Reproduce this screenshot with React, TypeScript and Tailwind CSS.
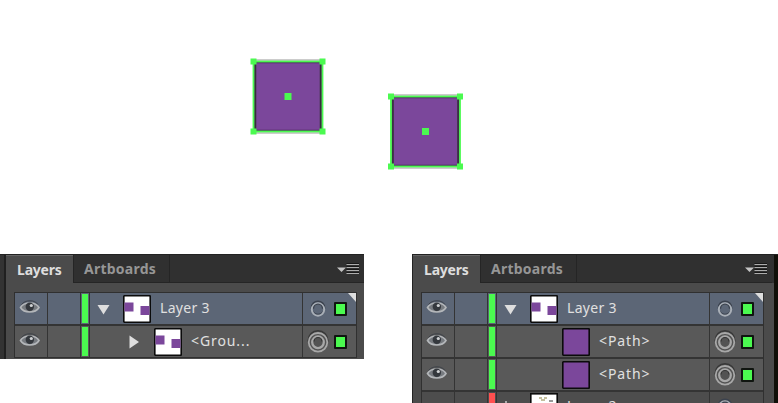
import type { ReactNode } from "react";

function Eye() {
  return (
    <svg width="22" height="18" viewBox="0 0 22 18">
      <path d="M1.5 9.500C5 3.500 16.500 3.500 20 9.500C16.500 15.500 5 15.500 1.500 9.500Z" fill="#777b80" stroke="#b4b7ba" strokeWidth="1.600" />
      <path d="M2.500 6.500C6 1.500 16 1.500 19 6.500" fill="none" stroke="#3b4047" strokeWidth="0.900" />
      <circle cx="10.800" cy="8.800" r="4.200" fill="#34383d" />
      <circle cx="12.300" cy="7.500" r="1.600" fill="#d0d2d4" />
    </svg>
  );
}

function Target({ double }: { double?: boolean }) {
  return (
    <svg width="24" height="26" viewBox="0 0 24 26">
      {double ? (
        <>
          <circle cx="12" cy="12.500" r="9.800" fill="none" stroke="#383838" strokeWidth="1.500" />
          <circle cx="12" cy="14.300" r="9.300" fill="#535353" stroke="#a8a8a8" strokeWidth="1.800" />
          <circle cx="12" cy="14.300" r="5.800" fill="none" stroke="#a8a8a8" strokeWidth="2.300" />
          <path d="M8 13.500a4 4 0 0 1 8 0" fill="none" stroke="#333" strokeWidth="1.200" />
        </>
      ) : (
        <>
          <circle cx="12" cy="12.800" r="6.600" fill="none" stroke="#3b424e" strokeWidth="1.500" />
          <circle cx="12" cy="14.500" r="6.200" fill="none" stroke="#a9afb7" strokeWidth="2" />
          <path d="M7.500 13.700a4.500 4.500 0 0 1 9 0" fill="none" stroke="#3b424e" strokeWidth="1.300" />
        </>
      )}
    </svg>
  );
}

function Thumb({ solid }: { solid?: boolean }) {
  return (
    <svg width="28" height="28" viewBox="0 0 28 28" className="shrink-0">
      <rect x="0.750" y="0.750" width="26.500" height="26.500" rx="1" fill={solid ? "#7b479b" : "#fff"} stroke="#0b0b0b" strokeWidth="1.700" />
      {!solid && (
        <>
          <rect x="1.500" y="7.500" width="9" height="9" fill="#7b479b" />
          <rect x="17.500" y="11" width="9" height="9" fill="#7b479b" />
        </>
      )}
    </svg>
  );
}

function Arrow({ open }: { open?: boolean }) {
  return (
    <svg width="14" height="14" viewBox="0 0 14 14" className="shrink-0">
      <path d={open ? "M0.500 3H12.500L6.500 12.500Z" : "M1.500 0.500V13.500L11 7Z"} fill="#dedede" />
    </svg>
  );
}

function Row({ selected, children }: { selected?: boolean; children: ReactNode }) {
  return (
    <div className={`flex h-[31px] gap-px ${selected ? "[&>*]:bg-[#5c6676]" : "[&>*]:bg-[#595959]"}`}>
      <div className="w-8 pt-[5px] pl-1"><Eye /></div>
      <div className="w-8" />
      <div className="flex w-[8px] justify-center py-px"><div className="h-full w-1.5 bg-[#4bfa50]" /></div>
      <div className="flex w-[212px] items-center">{children}</div>
      <div className="relative flex w-[53px]">
        <div className="w-[31px] pt-[2px] pl-[3px]"><Target double={!selected} /></div>
        <div className="mt-[9px] h-[14px] w-[13px] rounded-[1px] border-2 border-[#101510] bg-[#4bfa50]" />
        {selected && <svg className="absolute top-0 right-0" width="8" height="9"><path d="M0 0H8V9Z" fill="#dedede" /></svg>}
      </div>
    </div>
  );
}

function Tabs() {
  return (
    <div className="flex h-7 text-[14px] font-bold">
      <div className="-mb-px h-[29px] w-[67px] border-t border-[#646464] bg-[#4b4b4b] pl-[11px] leading-[27px] text-[#dedede]"><span className="tracking-[-0.200px]">Layers</span></div>
      <div className="w-[97px] border-x border-b border-[#252525] pl-[10px] leading-[28px] text-[#969696]"><span className="tracking-[0.250px]">Artboards</span></div>
      <div className="flex flex-1 justify-end border-b border-[#252525] pt-[7px] pr-[4px]">
        <svg width="24" height="16" viewBox="0 0 24 16">
          <path d="M1 5.500H10L5.500 10Z" fill="#c4c4c4" />
          <path d="M10.500 1.500H23M10.500 4.500H23M10.500 7.500H23M10.500 10.500H23" stroke="#181818" />
          <path d="M10.500 2.500H23M10.500 5.500H23M10.500 8.500H23M10.500 11.500H23" stroke="#adadad" />
        </svg>
      </div>
    </div>
  );
}

function Label({ children, wide }: { children: ReactNode; wide?: boolean }) {
  return <span className={`pb-px text-[14px] leading-5 whitespace-nowrap text-[#e0e0e0] ${wide ? "tracking-[0.900px]" : "tracking-[0.300px]"}`}>{children}</span>;
}

function LayerOne() {
  return (
    <Row selected>
      <div className="w-[7px] shrink-0" /><Arrow open />
      <div className="w-3 shrink-0" /><Thumb />
      <div className="w-[9px] shrink-0" /><Label>Layer 3</Label>
    </Row>
  );
}

function PathRow() {
  return (
    <Row>
      <div className="w-[65px] shrink-0" /><Thumb solid />
      <div className="w-[9px] shrink-0" /><Label wide>&lt;Path&gt;</Label>
    </Row>
  );
}

function Shape({ x, y }: { x: number; y: number }) {
  const corners = [[0, 0], [69, 0], [0, 70], [69, 70]];
  return (
    <g transform={`translate(${x} ${y})`}>
      <path d="M0 -1.500H69M0 71.500H69" stroke="#999" />
      <rect x="1" y="1" width="67" height="68" fill="#7b479b" stroke="#4c265d" strokeWidth="1.500" />
      <path d="M2 2V68M67 2V68" stroke="#343039" strokeWidth="1.500" />
      <rect width="69" height="70" fill="none" stroke="#4bfa50" strokeWidth="1.800" />
      {corners.map(([cx, cy]) => <rect key={`${cx}-${cy}`} x={cx - 3} y={cy - 3} width="6" height="6" fill="#4bfa50" />)}
      <rect x="31" y="31.500" width="7" height="7" fill="#4bfa50" />
    </g>
  );
}

export default function App() {
  return (
    <main className="h-[403px] w-[778px] overflow-hidden bg-white font-['Noto_Sans','Open_Sans',sans-serif]">
      <svg className="block" width="778" height="254">
        <Shape x={253.5} y={61.5} />
        <Shape x={391} y={96.500} />
      </svg>
      <div className="flex h-[149px] items-start justify-between">
        <section className="flex h-[105px] w-[364px] overflow-hidden border-t border-[#222] bg-[#4b4b4b]">
          <div className="w-1.5 shrink-0 border-r-2 border-[#202020] bg-[#333]" />
          <div className="w-[358px] shrink-0">
            <div className="bg-[#303030]"><Tabs /></div>
            <div className="mt-[9px] ml-2 flex w-[343px] flex-col gap-[2px] border border-[#303030] bg-[#343434]">
              <LayerOne />
              <Row>
                <div className="w-[38px] shrink-0" /><Arrow />
                <div className="w-[12px] shrink-0" /><Thumb />
                <div className="w-[9px] shrink-0" /><Label wide>&lt;Grou...</Label>
              </Row>
            </div>
          </div>
        </section>
        <section className="flex h-[149px] w-[366px] overflow-hidden border-t border-[#222] bg-[#4b4b4b]">
          <div className="w-px shrink-0 bg-[#242424]" />
          <div className="w-[361px] shrink-0">
            <div className="bg-[#303030] pr-[2px]"><Tabs /></div>
            <div className="mt-[9px] ml-2 flex w-[343px] flex-col gap-[2px] border border-[#303030] bg-[#343434]">
              <LayerOne />
              <PathRow />
              <PathRow />
              <div className="flex h-[12px] gap-px overflow-hidden [&>*]:bg-[#4d4d4d]">
                <div className="w-8" />
                <div className="w-8" />
                <div className="flex w-[8px] justify-center pt-px"><div className="w-1.5 bg-[#ff5050]" /></div>
                <div className="flex w-[212px] overflow-hidden">
                  <div className="mt-[9px] ml-2 h-2 w-0.5 bg-[#aaa]" />
                  <svg className="mt-px ml-[23px] shrink-0" width="28" height="28">
                    <rect x="0.750" y="0.750" width="26.500" height="26.500" fill="#fff" stroke="#0b0b0b" strokeWidth="1.700" />
                    <path d="M9 5h3m2 0h3M11 7h4" stroke="#8a803f" /><path d="M19 8h4" stroke="#333" />
                  </svg>
                  <span className="mt-[4px] ml-[9px] text-[14px] leading-5 tracking-[0.300px] text-[#e0e0e0]">Layer 2</span>
                </div>
                <div className="w-[53px] pt-px pl-[3px]"><Target /></div>
              </div>
            </div>
          </div>
          <div className="w-1 shrink-0 bg-[#100f08]" />
        </section>
      </div>
    </main>
  );
}
